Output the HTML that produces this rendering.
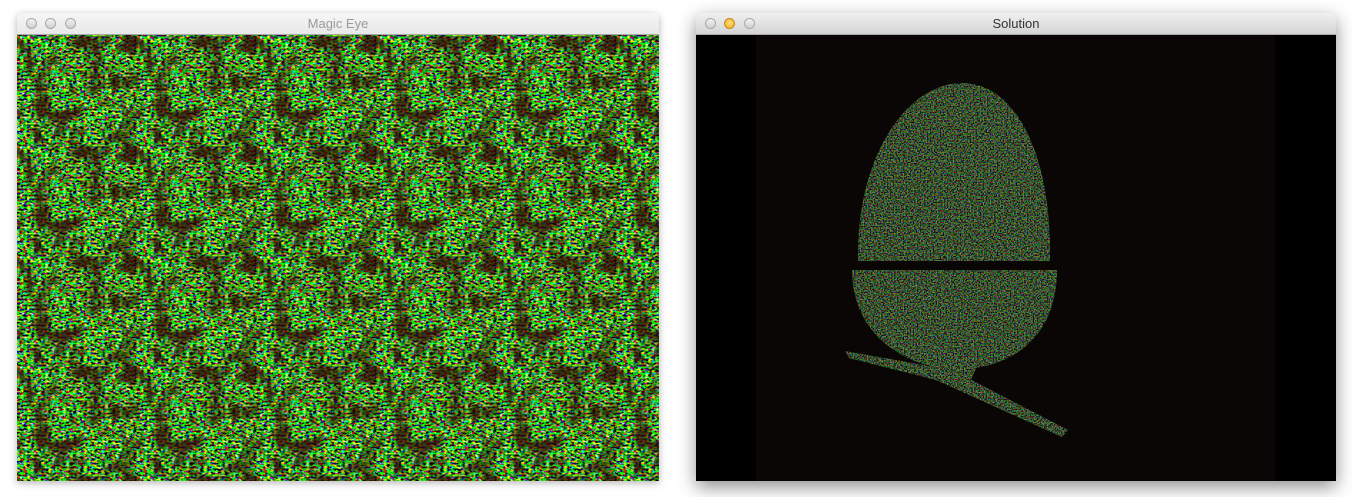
<!DOCTYPE html>
<html><head><style>
html,body{margin:0;padding:0;background:#fff;width:1352px;height:497px;overflow:hidden;position:relative;font-family:"Liberation Sans",sans-serif}
.win{position:absolute;top:13px;height:468px;border-radius:5px 5px 0 0;overflow:hidden}
#w1{left:17px;width:642px;box-shadow:0 2px 8px rgba(0,0,0,.3)}
#w2{left:696px;width:640px;box-shadow:0 6px 18px rgba(0,0,0,.45)}
.tb{height:22px;background:linear-gradient(#f0f0f0,#d4d4d4);border-bottom:1px solid #a8a8a8;box-sizing:border-box;text-align:center;font-size:13px;line-height:22px;position:relative}
#w1 .tb{color:#9a9a9a;background:linear-gradient(#f6f6f6,#e8e8e8)}
#w2 .tb{color:#333}
.b{position:absolute;top:5px;width:11px;height:11px;border-radius:50%;background:linear-gradient(#f3f3f3,#cfcfcf);border:1px solid #a9a9a9;box-sizing:border-box}
.c{position:absolute;top:22px;left:0;width:100%;height:446px}
</style></head><body>
<div class="win" id="w1"><div class="tb">Magic Eye
<div class="b" style="left:9px"></div><div class="b" style="left:28px"></div><div class="b" style="left:48px"></div></div>
<svg class="c" width="642" height="446">
<defs>
<filter id="n" x="0" y="0" width="100%" height="100%">
<feTurbulence type="fractalNoise" baseFrequency="0.28 0.5" numOctaves="2" seed="3" stitchTiles="stitch"/>
<feColorMatrix values="4 0 0 0 -2.0  0 5 0 0 -2.05  0 0 3 0 -1.6  0 0 0 0 1"/>
</filter>
<filter id="m" x="0" y="0" width="100%" height="100%">
<feTurbulence type="fractalNoise" baseFrequency="0.06 0.05" numOctaves="2" seed="7" stitchTiles="stitch"/>
<feColorMatrix values="0 0 0 0 0.03  0 0 0 0 0  0 0 0 0 0  0 0 0 -4 2.2"/>
</filter>
<pattern id="p" width="120" height="110" patternUnits="userSpaceOnUse">
<rect width="120" height="110" filter="url(#n)"/>
<rect width="120" height="110" filter="url(#m)" opacity=".75"/>
</pattern>
</defs>
<rect width="642" height="446" fill="url(#p)"/>
</svg>
</div>
<div class="win" id="w2"><div class="tb">Solution
<div class="b" style="left:9px"></div><div class="b" style="left:28px;background:radial-gradient(circle at 50% 40%,#ffe27a,#f0a418);border-color:#c98a1a"></div><div class="b" style="left:48px"></div></div>
<svg class="c" width="640" height="446">
<defs>
<filter id="n2" x="0" y="0" width="100%" height="100%">
<feTurbulence type="fractalNoise" baseFrequency="0.7 0.7" numOctaves="1" seed="11"/>
<feColorMatrix values="4 0 0 0 -1.8  0 5 0 0 -2.1  0 0 4 0 -1.9  0 0 0 0 1"/>
</filter>
<clipPath id="egg">
<path d="M162,226 C160,120 212,48 266,48 C320,48 356,120 354,226 Z"/>
<path d="M156,235 L361,235 C361,290 330,325 280,333 L275,345 L250,345 L245,333 C195,325 156,290 156,235Z"/>
<path d="M149,316 L153,323 L240,345 L366,402 L372,395 L262,338 L245,333 Z"/>
</clipPath>
</defs>
<rect width="640" height="446" fill="#000"/>
<rect x="60" width="519" height="446" fill="#0a0605"/>
<g clip-path="url(#egg)"><rect width="640" height="446" fill="#050d05"/><rect width="640" height="446" filter="url(#n2)" opacity=".5"/></g>
</svg>
</div>
</body></html>
